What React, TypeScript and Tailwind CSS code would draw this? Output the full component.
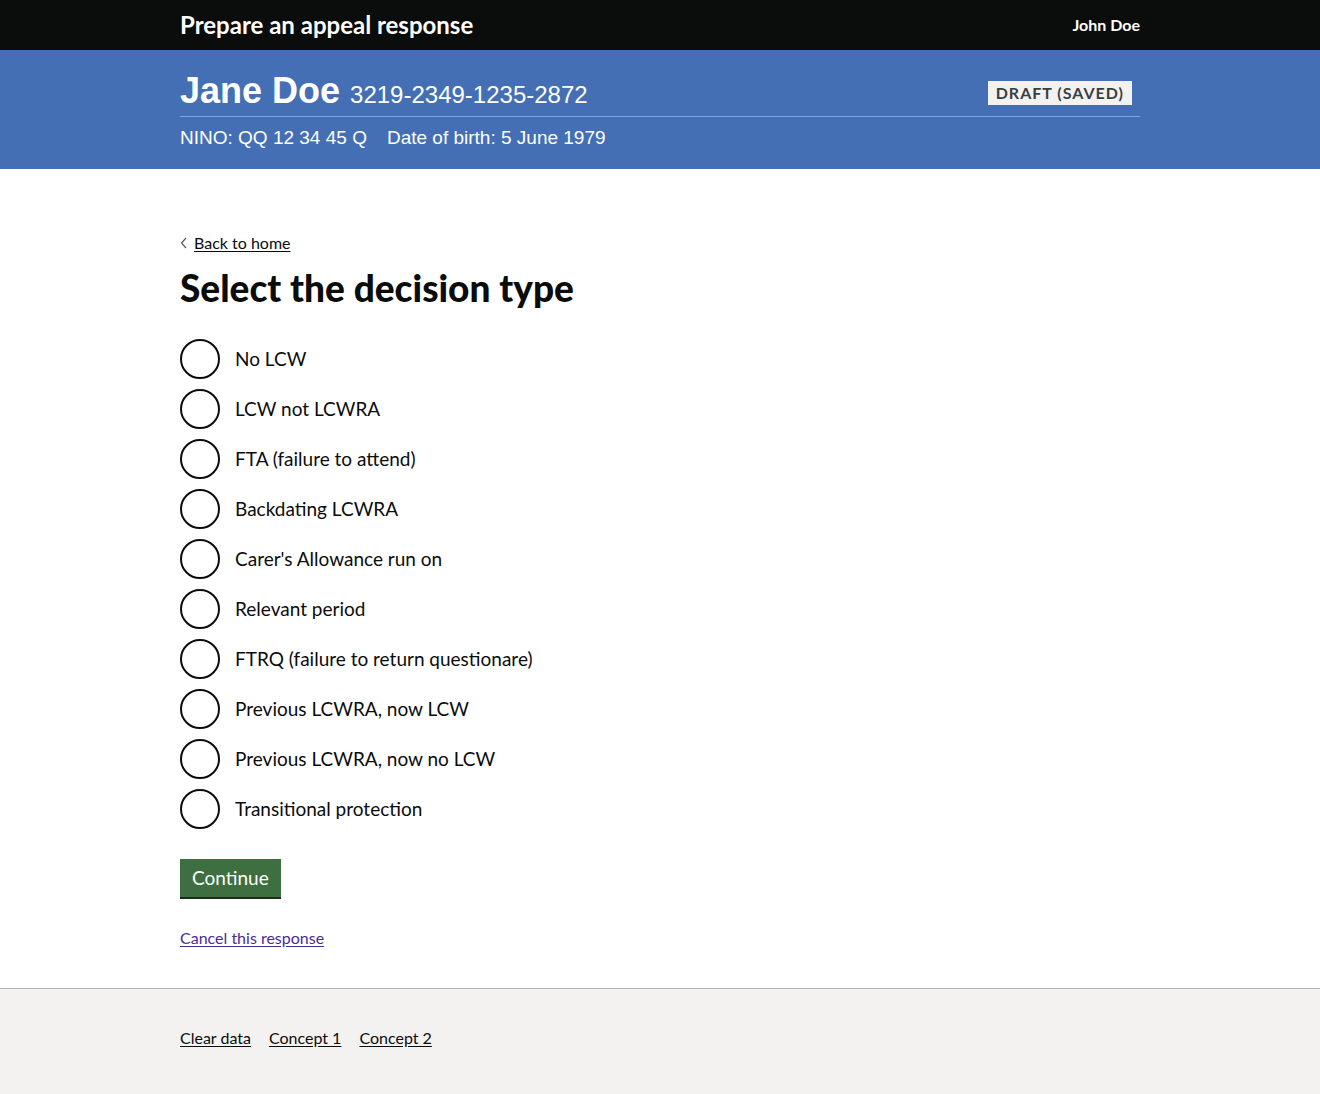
import React from 'react';

const options = [
  'No LCW',
  'LCW not LCWRA',
  'FTA (failure to attend)',
  'Backdating LCWRA',
  "Carer's Allowance run on",
  'Relevant period',
  'FTRQ (failure to return questionare)',
  'Previous LCWRA, now LCW',
  'Previous LCWRA, now no LCW',
  'Transitional protection',
];

const sans = "font-['Lato','Liberation_Sans',sans-serif]";

export default function App() {
  return (
    <div className={`min-h-[1094px] flex flex-col bg-white text-[#0b0c0c] ${sans}`}>
      {/* HEADER */}
      <header className="bg-[#0b0c0c] h-[50px]">
        <div className="w-[960px] mx-auto h-full flex items-center justify-between">
          <span className="text-white font-bold text-[24px]">Prepare an appeal response</span>
          <span className="text-white font-bold text-[16px]">John Doe</span>
        </div>
      </header>

      {/* CASE BANNER */}
      <div className="bg-[#446fb5] h-[119px]">
        <div className="w-[960px] mx-auto pt-[20px] font-['Liberation_Sans',Arial,sans-serif] text-white">
          <div className="flex items-end justify-between border-b border-[#7ea2dc] pb-[4px]">
            <div className="flex items-baseline gap-[10px]">
              <span className="text-[36px] font-bold leading-[42px]">Jane Doe</span>
              <span className="text-[24px] leading-[28px]">3219-2349-1235-2872</span>
            </div>
            <span className={`bg-[#f3f2f1] text-[#383f43] text-[16px] font-bold tracking-[1px] px-[8px] h-[24px] leading-[24px] mr-[8px] mb-[7px] ${sans}`}>
              DRAFT (SAVED)
            </span>
          </div>
          <div className="text-[19px] leading-[24px] pt-[9px] flex gap-[20px]">
            <span>NINO: QQ 12 34 45 Q</span>
            <span>Date of birth: 5 June 1979</span>
          </div>
        </div>
      </div>

      {/* MAIN */}
      <main className="flex-1">
        <div className="w-[960px] mx-auto pt-[62px] pb-[36px]">
          <a href="#" className="inline-flex items-center gap-[6px] text-[16px] text-[#0b0c0c] underline underline-offset-2">
            <svg width="8" height="12" viewBox="0 0 8 12" fill="none">
              <path d="M6 1L1.5 6L6 11" stroke="#505a5f" strokeWidth="1.2" />
            </svg>
            Back to home
          </a>
          <h1 className="text-[37px] font-black leading-[40px] mt-[13px] mb-[31px]">Select the decision type</h1>

          <div className="flex flex-col gap-[10px]">
            {options.map((o) => (
              <label key={o} className="flex items-center gap-[15px] h-[40px] cursor-pointer">
                <span className="w-[40px] h-[40px] rounded-full border-2 border-[#0b0c0c] shrink-0" />
                <span className="text-[19px]">{o}</span>
              </label>
            ))}
          </div>

          <button className="mt-[30px] bg-[#3e6f40] text-white text-[19px] px-[12px] h-[38px] shadow-[0_2px_0_#1b2e1c] leading-[38px]">
            Continue
          </button>

          <div className="mt-[29px]">
            <a href="#" className="text-[16px] text-[#4c2c92] underline underline-offset-2">Cancel this response</a>
          </div>
        </div>
      </main>

      {/* FOOTER */}
      <footer className="bg-[#f3f2f1] border-t border-[#b1b4b6] h-[106px]">
        <div className="w-[960px] mx-auto pt-[37px] flex gap-[18px] text-[16px]">
          <a href="#" className="underline underline-offset-2">Clear data</a>
          <a href="#" className="underline underline-offset-2">Concept 1</a>
          <a href="#" className="underline underline-offset-2">Concept 2</a>
        </div>
      </footer>
    </div>
  );
}
